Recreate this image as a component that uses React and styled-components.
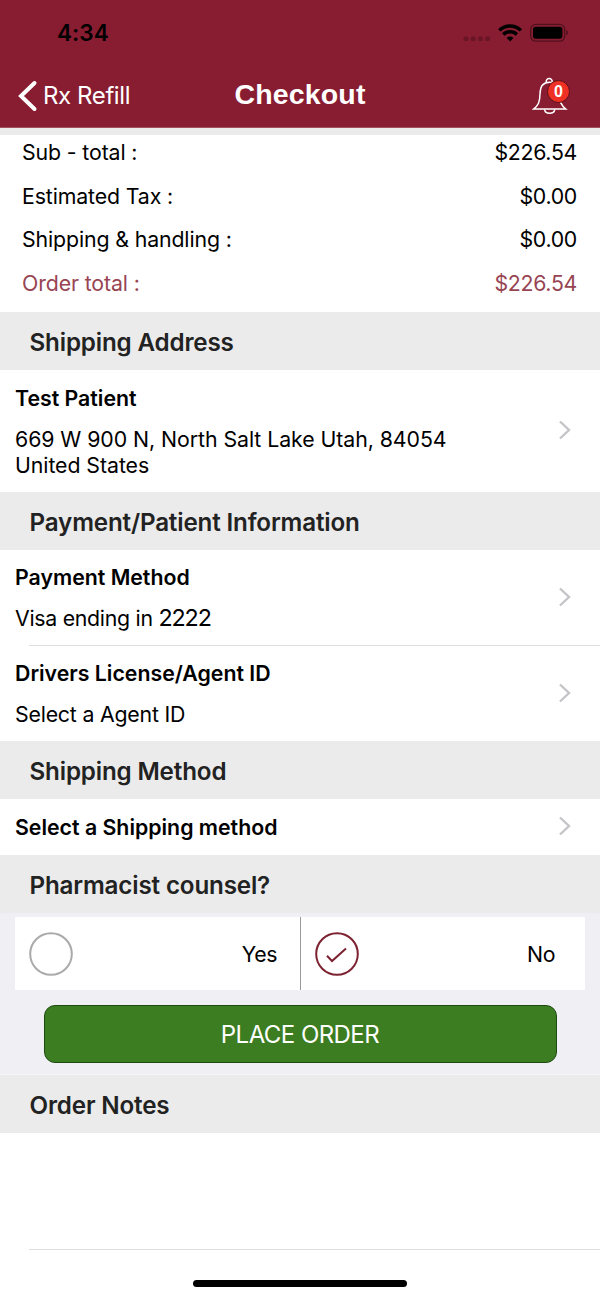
import React from 'react';
import styled, { createGlobalStyle } from 'styled-components';

const GlobalStyle = createGlobalStyle`
  * { box-sizing: border-box; }
  body {
    margin: 0;
    background: #fff;
    color: #000;
    font-family: Inter, "Liberation Sans", sans-serif;
  }
`;

const Screen = styled.div`
  width: 600px;
  height: 1299px;
  display: flex;
  flex-direction: column;
  overflow: hidden;
  background: #fff;
  white-space: nowrap;
`;

const Top = styled.header`
  height: 128px;
  flex: none;
  background: #881c31;
  border-bottom: 1px solid #a0505f;
`;

const StatusBar = styled.div`
  height: 64px;
  padding: 2px 32px 0 57px;
  display: flex;
  align-items: center;
  justify-content: space-between;
`;

const Clock = styled.span`
  margin-bottom: 1px;
  font-size: 22.5px;
  font-weight: 600;
  letter-spacing: 0.1px;
`;

const StatusIcons = styled.svg`
  display: block;
  width: 106px;
  height: 24px;
`;

const NavBar = styled.nav`
  height: 63px;
  padding: 0 28px 0 18px;
  display: grid;
  grid-template-columns: 1fr auto 1fr;
  align-items: center;
`;

const BackButton = styled.button`
  display: flex;
  align-items: center;
  gap: 5px;
  padding: 0;
  border: 0;
  background: none;
  color: #fff;
  font: 400 24px/32px Inter, sans-serif;
  letter-spacing: -0.4px;
`;

const Title = styled.h1`
  margin: 0 0 3px 10px;
  color: #fff;
  font: bold 28.5px/32px "Liberation Sans", sans-serif;
  letter-spacing: 0.15px;
`;

const BellButton = styled.button`
  justify-self: end;
  position: relative;
  width: 40px;
  height: 40px;
  padding: 0;
  border: 0;
  background: none;
`;

const Badge = styled.span`
  position: absolute;
  top: 4px;
  right: 2px;
  width: 23px;
  height: 23px;
  border: 1px solid #5a1018;
  border-radius: 50%;
  background: #ee3124;
  color: #fff;
  font: bold 16px/21px "Liberation Sans", sans-serif;
  text-align: center;
`;

const Summary = styled.section`
  height: 184px;
  flex: none;
  display: flex;
  flex-direction: column;
  gap: 7.5px;
  padding: 0 23px 0 22px;
  border-top: 7px solid #ebebeb;
`;

const SummaryRow = styled.div`
  display: flex;
  justify-content: space-between;
  font-size: 21.3px;
  line-height: 35px;
  height: 36px;
  color: ${(p) => (p.$accent ? '#974453' : '#000')};
`;

const SummaryLabel = styled.span`
  letter-spacing: -0.12px;
`;

const Amount = styled.span`
  letter-spacing: -0.3px;
`;

const SectionHeader = styled.h2`
  height: 58px;
  flex: none;
  margin: 0;
  padding: 2px 0 0 29.5px;
  background: #ebebeb;
  color: #222;
  font-size: 24.2px;
  font-weight: 600;
  line-height: 57px;
  letter-spacing: -0.16px;
`;

const Row = styled.div`
  height: ${(p) => p.$h}px;
  flex: none;
  display: flex;
  align-items: center;
  justify-content: space-between;
  padding: 0 29px 0 15px;
`;

const RowText = styled.div`
  display: flex;
  flex-direction: column;
  gap: 15px;
`;

const RowTitle = styled.div`
  font-size: 21.3px;
  font-weight: 600;
  line-height: 26px;
`;

const RowDetail = styled.div`
  font-size: 21.3px;
  line-height: 26px;
  letter-spacing: ${(p) => p.$ls || -0.06}px;
`;

const CardDigits = styled.span`
  font-size: 23.3px;
  letter-spacing: -1.1px;
`;

const Separator = styled.hr`
  width: 571px;
  height: 1px;
  flex: none;
  margin: 0 0 0 29px;
  border: 0;
  background: #dfdfe1;
`;

const CounselPanel = styled.section`
  height: 162px;
  flex: none;
  padding: 4px 15px 0;
  background: #efeff4;
  border-bottom: 1px solid #f5f5f7;
`;

const Options = styled.div`
  display: grid;
  grid-template-columns: 286px 284px;
  height: 73px;
  background: #fff;
`;

const Option = styled.label`
  display: flex;
  align-items: center;
  justify-content: space-between;
  padding: 0 ${(p) => p.$right}px 0 14px;
  border-right: ${(p) => (p.$divider ? '1px solid #999' : '0')};
  font-size: 21.3px;
  letter-spacing: -0.4px;
`;

const PlaceOrder = styled.button`
  display: block;
  width: 513px;
  height: 58px;
  margin: 14.5px 0 0 28.5px;
  padding: 0;
  border: 1.5px solid #1c4a10;
  border-radius: 11px;
  background: #3c7d21;
  color: #fff;
  font: 400 24px/57px Inter, sans-serif;
  letter-spacing: -0.55px;
`;

const Notes = styled.div`
  height: 116px;
  flex: none;
`;

const HomeIndicator = styled.div`
  width: 214px;
  height: 7px;
  margin: 30px auto 0;
  border-radius: 4px;
  background: #000;
`;

const ChevronIcon = styled.svg`
  flex: none;
  margin-bottom: 2px;
`;

const Chevron = () => (
  <ChevronIcon width="12" height="20" viewBox="0 0 12 20" fill="none">
    <path d="M1 1.5 L10 10 L1 18.5" stroke="#c5c5c9" strokeWidth="2.4" />
  </ChevronIcon>
);

const Radio = ({ checked }) => (
  <svg width="44" height="44" viewBox="0 0 44 44" fill="none" stroke={checked ? '#7d2231' : '#aaa'} strokeWidth="2">
    <circle cx="22" cy="22" r="20.8" />
    {checked && <path d="M12 23.8 L17 29 L31 16.5" />}
  </svg>
);

const totals = [
  { label: 'Sub - total :', value: '$226.54' },
  { label: 'Estimated Tax :', value: '$0.00' },
  { label: 'Shipping & handling :', value: '$0.00' },
  { label: 'Order total :', value: '$226.54', accent: true },
];

export default function App() {
  return (
    <Screen>
      <GlobalStyle />
      <Top>
        <StatusBar>
          <Clock>4:34</Clock>
          <StatusIcons viewBox="0 0 106 24">
            <g fill="#000" fillOpacity="0.22">
              <rect x="1.5" y="15.5" width="5" height="4.6" rx="1.6" />
              <rect x="8.7" y="15.5" width="5" height="4.6" rx="1.6" />
              <rect x="15.9" y="15.5" width="5" height="4.6" rx="1.6" />
              <rect x="23.1" y="15.5" width="5" height="4.6" rx="1.6" />
            </g>
            <g fill="none" stroke="#000" strokeWidth="3.4">
              <path d="M37.3 9.4 A15.4 15.4 0 0 1 58.9 9.4" />
              <path d="M41.3 13.5 A9.7 9.7 0 0 1 54.9 13.5" />
            </g>
            <path d="M48.1 20.4 L44.7 17 A4.8 4.8 0 0 1 51.5 17 Z" />
            <rect x="68.7" y="3.4" width="34" height="16.8" rx="5" fill="none" stroke="#000" strokeOpacity="0.4" strokeWidth="1.3" />
            <rect x="71" y="5.8" width="29.4" height="12" rx="2.8" />
            <path d="M104.2 9 Q106 9.8 106 11.7 Q106 13.6 104.2 14.4 Z" fillOpacity="0.4" />
          </StatusIcons>
        </StatusBar>
        <NavBar>
          <BackButton>
            <svg width="20" height="32" viewBox="0 0 20 32" fill="none">
              <path d="M16.5 3 L3 16 L16.5 29" stroke="#fff" strokeWidth="4" strokeLinecap="round" />
            </svg>
            Rx Refill
          </BackButton>
          <Title>Checkout</Title>
          <BellButton aria-label="Notifications">
            <svg width="40" height="40" viewBox="0 0 40 40" fill="none" stroke="#fff" strokeWidth="1.5">
              <path d="M14.3 6.2 A3 3 0 1 1 20.1 6.2" />
              <path d="M1.6 33 H33.8 C29.5 29.5 27 26 26.8 19 C26.8 10 23.5 6.3 17.6 6.3 C11.7 6.3 8.1 10 8 18 C7.9 26 6.2 29.5 1.6 33 Z" />
              <path d="M12.5 33.4 A5.2 4.6 0 0 0 22.8 33.4" />
            </svg>
            <Badge>0</Badge>
          </BellButton>
        </NavBar>
      </Top>

      <Summary>
        {totals.map((t) => (
          <SummaryRow key={t.label} $accent={t.accent}>
            <SummaryLabel>{t.label}</SummaryLabel>
            <Amount>{t.value}</Amount>
          </SummaryRow>
        ))}
      </Summary>

      <SectionHeader>Shipping Address</SectionHeader>
      <Row $h={122}>
        <RowText>
          <RowTitle>Test Patient</RowTitle>
          <RowDetail>
            669 W 900 N, North Salt Lake Utah, 84054
            <br />
            United States
          </RowDetail>
        </RowText>
        <Chevron />
      </Row>

      <SectionHeader>Payment/Patient Information</SectionHeader>
      <Row $h={95}>
        <RowText>
          <RowTitle>Payment Method</RowTitle>
          <RowDetail $ls={-0.28}>
            Visa ending in <CardDigits>2222</CardDigits>
          </RowDetail>
        </RowText>
        <Chevron />
      </Row>
      <Separator />
      <Row $h={95}>
        <RowText>
          <RowTitle>Drivers License/Agent ID</RowTitle>
          <RowDetail $ls={-0.2}>Select a Agent ID</RowDetail>
        </RowText>
        <Chevron />
      </Row>

      <SectionHeader>Shipping Method</SectionHeader>
      <Row $h={56}>
        <RowTitle>Select a Shipping method</RowTitle>
        <Chevron />
      </Row>

      <SectionHeader>Pharmacist counsel?</SectionHeader>
      <CounselPanel>
        <Options>
          <Option $right={23} $divider>
            <Radio />
            Yes
          </Option>
          <Option $right={30}>
            <Radio checked />
            No
          </Option>
        </Options>
        <PlaceOrder>PLACE ORDER</PlaceOrder>
      </CounselPanel>

      <SectionHeader>Order Notes</SectionHeader>
      <Notes />
      <Separator />
      <HomeIndicator />
    </Screen>
  );
}
